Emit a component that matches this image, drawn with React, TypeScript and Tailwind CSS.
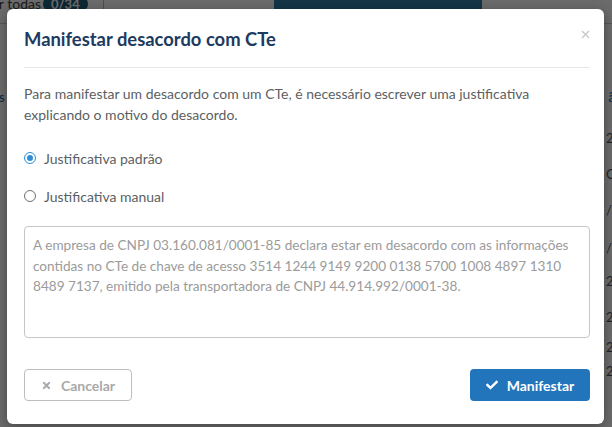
import { FaCheck, FaTimes } from "react-icons/fa";

const rightCells = [
  { h: "h-[43px]", t: "2" },
  { h: "h-[36px]", t: "C" },
  { h: "h-[36px]", t: "/2" },
  { h: "h-[38px]", t: "/2" },
  { h: "h-[33px]", t: "2c" },
  { h: "h-[36px]", t: "2" },
  { h: "h-[30px]", t: "2" },
  { h: "h-[24px]", t: "2" },
];

function PageBehind() {
  return (
    <div className="flex h-full w-full flex-col bg-white text-[13px] text-[#555]">
      <div className="flex h-[24px] items-start border-b border-[#ccc]">
        <div className="-mt-[7px] flex w-[41px] justify-end whitespace-nowrap text-[14px] text-[#444]">Selecionar todas</div>
        <span className="-mt-[4px] ml-[2px] rounded-full bg-[#1f5f7a] px-[8px] text-[13px] font-bold leading-[16px] text-white">0/34</span>
        <div className="ml-[15px] h-full w-px bg-[#bbb]" />
        <div className="ml-[170px] h-[9px] w-[208px] bg-[#2e7fa6]" />
      </div>
      <div className="flex h-[87px] items-end justify-between pb-[4px] font-semibold text-[#2a6fb0]">
        <span className="-ml-[1px]">s</span>
        <span className="-mr-[3px]">ã</span>
      </div>
      {rightCells.map((c, i) => (
        <div key={i} className={`flex ${c.h} items-end justify-end pb-[6px]`}>
          <span className="w-[6px] overflow-hidden whitespace-nowrap">{c.t}</span>
        </div>
      ))}
    </div>
  );
}

function Radio({ checked, label }: { checked: boolean; label: string }) {
  return (
    <label className="flex h-[20px] items-center gap-[8px]">
      <span
        className={`flex h-[12px] w-[12px] items-center justify-center rounded-full border ${
          checked ? "border-[#2f8fd6]" : "border-[#6f6f6f]"
        }`}
      >
        {checked ? <span className="h-[6px] w-[6px] rounded-full bg-[#2f8fd6]" /> : null}
      </span>
      <span className="text-[14px] text-[#5b5f63]">{label}</span>
    </label>
  );
}

export default function App() {
  return (
    <div className="relative h-[427px] w-[612px] overflow-hidden font-['Lato',sans-serif]">
      <PageBehind />
      <div className="absolute inset-0 bg-black/[0.58]" />

      <div className="absolute left-[7px] top-[9px] w-[597px] rounded-[6px] bg-white pb-[23px] pl-[17px] pr-[14px] shadow-[0_3px_12px_rgba(0,0,0,0.35)]">
        <div className="flex items-start justify-between border-b border-[#e6e6e6] pb-[16px] pt-[18px]">
          <h2 className="text-[18.4px] font-bold leading-[24px] text-[#1d3a5f]">Manifestar desacordo com CTe</h2>
          <button className="mt-[3px] text-[#c9c9c9]" aria-label="Fechar">
            <svg width="9" height="9" viewBox="0 0 9 9" stroke="currentColor" strokeWidth="1.4">
              <path d="M1 1L8 8M8 1L1 8" />
            </svg>
          </button>
        </div>

        <p className="mt-[15px] text-[14px] leading-[21px] text-[#5b5f63]">
          Para manifestar um desacordo com um CTe, é necessário escrever uma justificativa explicando o motivo do desacordo.
        </p>

        <div className="mt-[23px] flex flex-col gap-[18px]">
          <Radio checked label="Justificativa padrão" />
          <Radio checked={false} label="Justificativa manual" />
        </div>

        <div className="mt-[20px] h-[112px] rounded-[4px] border border-[#c6c6c6] px-[8px] pt-[8px] text-[13.6px] leading-[20.5px] text-[#9b9b9b]">
          A empresa de CNPJ 03.160.081/0001-85 declara estar em desacordo com as informações contidas no CTe de chave de
          acesso 3514 1244 9149 9200 0138 5700 1008 4897 1310 8489 7137, emitido pela transportadora de CNPJ
          44.914.992/0001-38.
        </div>

        <div className="mt-[31px] flex items-center justify-between">
          <button className="flex h-[32px] w-[108px] items-center justify-center gap-[9px] rounded-[4px] border border-[#bdbdbd] text-[14px] font-bold text-[#a9a9a9]">
            <FaTimes className="h-[11px] w-[11px]" />
            Cancelar
          </button>
          <button className="flex h-[32px] w-[120px] items-center justify-center gap-[9px] rounded-[4px] bg-[#2274bb] text-[14px] font-bold text-white">
            <FaCheck className="h-[12px] w-[12px]" />
            Manifestar
          </button>
        </div>
      </div>
    </div>
  );
}
